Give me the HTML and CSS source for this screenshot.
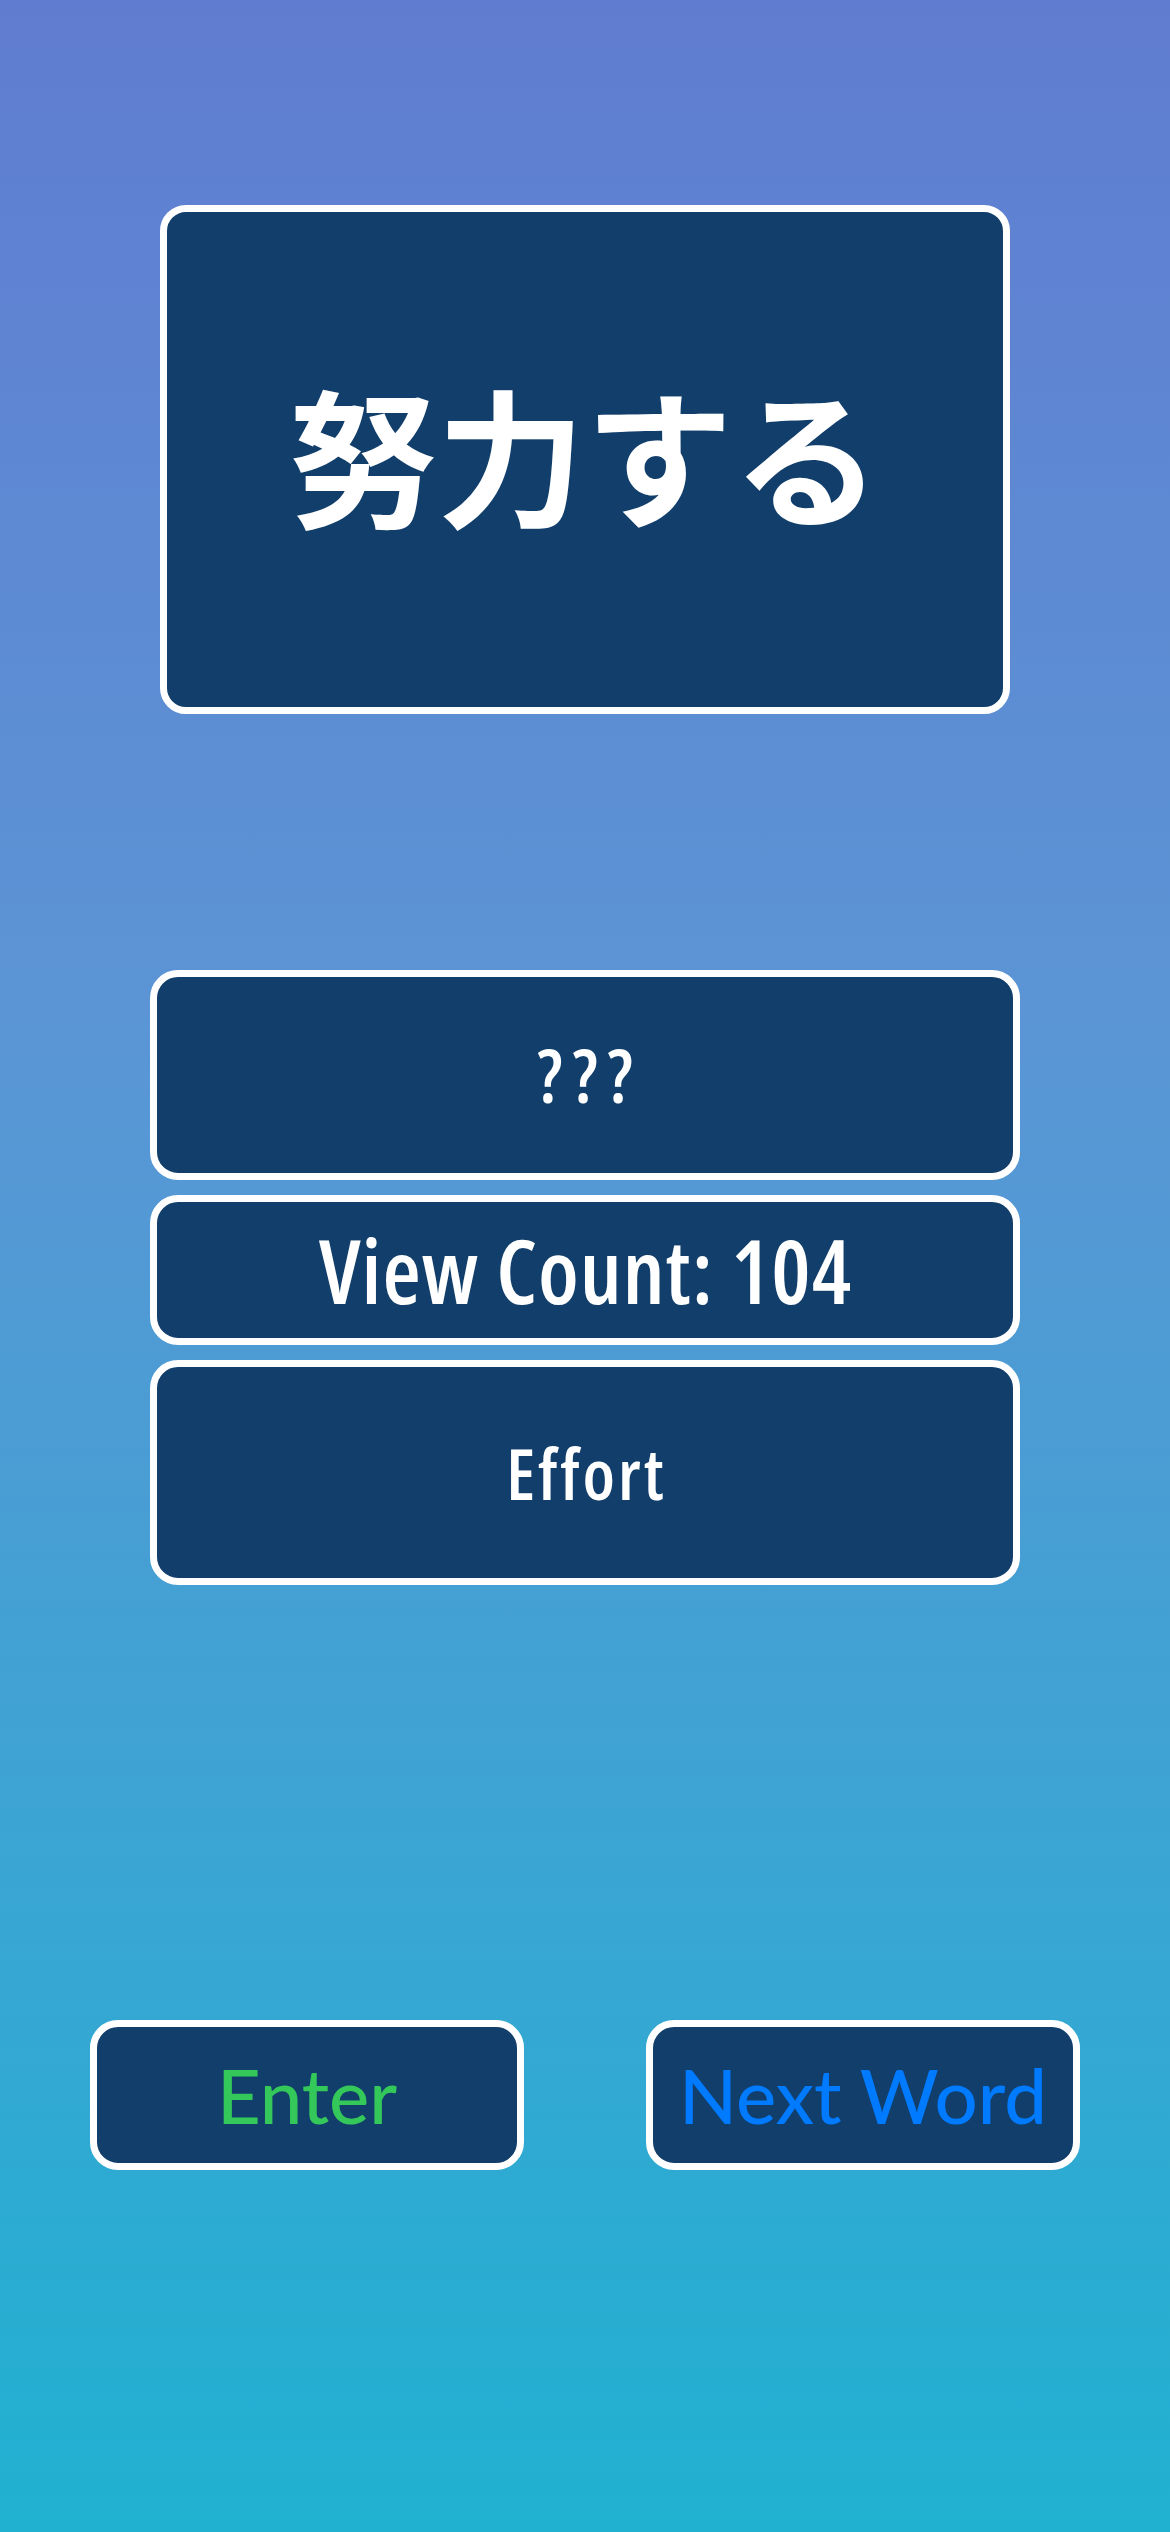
FILE: index.html
```html
<!DOCTYPE html>
<html lang="ja">
<head>
<meta charset="utf-8">
<title>Flashcard</title>
<link rel="stylesheet" href="styles.css">
</head>
<body>
<main class="screen">
  <section class="word-card">
    <h1 class="word">努力する</h1>
  </section>
  <section class="info">
    <div class="info-box info-reading"><span class="txt-q">???</span></div>
    <div class="info-box info-count"><span class="txt-count">View Count: 104</span></div>
    <div class="info-box info-meaning"><span class="txt-meaning">Effort</span></div>
  </section>
  <nav class="actions">
    <button class="btn btn-enter">Enter</button>
    <button class="btn btn-next">Next Word</button>
  </nav>
</main>
</body>
</html>
```
FILE: styles.css
```css
html, body {
  margin: 0;
  padding: 0;
}
body {
  width: 1170px;
  height: 2532px;
  overflow: hidden;
  background: linear-gradient(180deg, #607cd0 0%, #5b95d5 40%, #20b1d1 100%);
  font-family: "Roboto", "Liberation Sans", sans-serif;
}
.screen {
  display: flex;
  flex-direction: column;
  align-items: center;
  padding-top: 205px;
}
.word-card {
  box-sizing: border-box;
  width: 850px;
  height: 509px;
  background: #113e6a;
  border: 7px solid #fff;
  border-radius: 26px;
  display: flex;
  align-items: center;
  justify-content: center;
}
.word {
  margin: 0 0 16px 0;
  color: #fff;
  font-family: "Noto Sans CJK JP", sans-serif;
  font-weight: 700;
  font-size: 148px;
  line-height: 1;
}
.info {
  margin-top: 256px;
  width: 870px;
  display: flex;
  flex-direction: column;
  gap: 15px;
}
.info-box {
  box-sizing: border-box;
  background: #113e6a;
  border: 7px solid #fff;
  border-radius: 28px;
  display: flex;
  align-items: center;
  justify-content: center;
  color: #fff;
  font-family: "Open Sans", "Roboto", sans-serif;
  font-stretch: 75%;
  font-weight: 650;
  line-height: 1;
}
.info-reading { height: 210px; }
.info-count { height: 150px; }
.info-meaning { height: 225px; }
.txt-q {
  font-size: 74px;
  letter-spacing: 10px;
  margin-right: -10px;
}
.txt-count {
  font-size: 88px;
  letter-spacing: 1px;
  margin-right: -1px;
}
.txt-meaning {
  font-size: 70px;
  letter-spacing: 3px;
  margin-right: -3px;
}
.actions {
  margin-top: 435px;
  display: flex;
  gap: 122px;
}
.btn {
  box-sizing: border-box;
  width: 434px;
  height: 150px;
  background: #113e6a;
  border: 7px solid #fff;
  border-radius: 28px;
  font-family: "Lato", "Liberation Sans", sans-serif;
  font-weight: 500;
  font-size: 76px;
  line-height: 1;
  padding: 0;
  display: flex;
  align-items: center;
  justify-content: center;
}
.btn-enter { color: #34c759; }
.btn-next { color: #007aff; }
```
